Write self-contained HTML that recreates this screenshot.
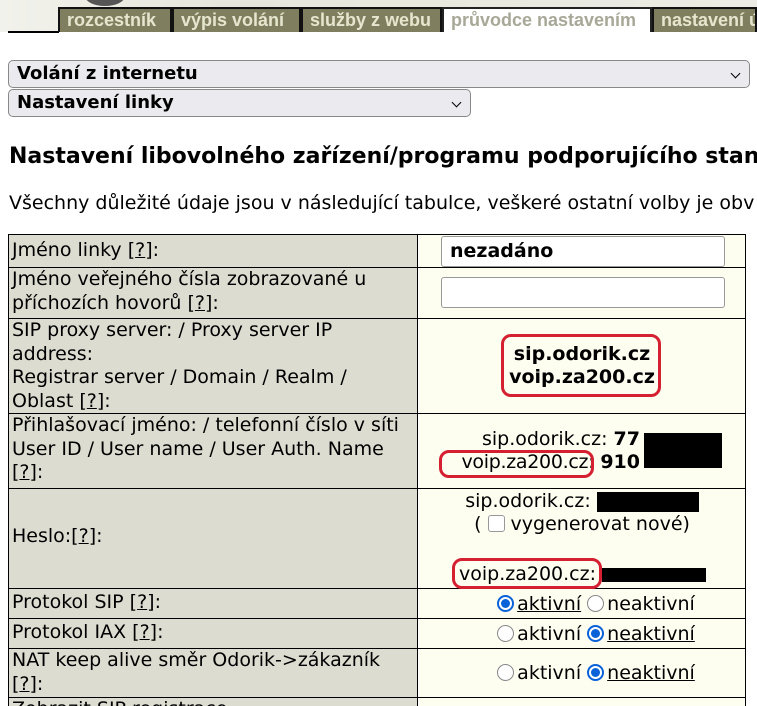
<!DOCTYPE html>
<html style="overflow:hidden"><head><meta charset="utf-8"><style>
*{box-sizing:border-box}
body{margin:0;width:757px;height:706px;overflow:hidden;background:#fff;font-family:"DejaVu Sans","Liberation Sans",sans-serif;font-size:19px;color:#000;position:relative}
#w{position:absolute;left:0;top:0;width:757px;height:706px;overflow:hidden}
.hdr{position:absolute;left:0;top:0;width:757px;height:32px;background:linear-gradient(90deg,#f2f2ec,#e6e6dc 30%,#ecece4)}
.blob{position:absolute;left:85px;top:-14px;width:40px;height:20px;border-radius:50%;background:#555}
.tab{position:absolute;top:7px;height:25px;background:#7f7f5f;border:2px solid #111;border-bottom:none;color:#e6e6cf;font-family:"Liberation Sans",sans-serif;font-size:18px;font-weight:bold;line-height:22px;padding-left:7px;white-space:nowrap;overflow:hidden}
.tab.on{background:#fff;color:#a8a898;border-color:#222}
.sel{position:absolute;left:8px;height:28px;border:1px solid #888;border-radius:5px;background:#ebebef;font-weight:bold;font-size:18px;line-height:26px;padding-left:8px}
.sel:after{content:"";position:absolute;right:10px;top:9px;width:6px;height:6px;border-right:1.5px solid #000;border-bottom:1.5px solid #000;transform:rotate(45deg)}
h2{position:absolute;left:9px;top:144px;margin:0;font-size:22px;white-space:nowrap}
p{position:absolute;left:9px;top:192px;margin:0;white-space:nowrap}
.row{position:absolute;left:8px;width:738px;border:1px solid #000;border-top:none}
.l{position:absolute;left:0;top:0;bottom:0;width:409px;background:#dcdcd0;border-right:1px solid #000;padding:0 3px;line-height:23.5px;white-space:nowrap}
.r{position:absolute;left:410px;top:0;bottom:0;right:0;background:#fdfdf0;text-align:center;line-height:23px;white-space:nowrap}
u{text-decoration:underline}
.inp{position:absolute;left:22px;width:284px;height:31px;border:1px solid #999;border-radius:3px;background:#fff;text-align:left;padding-left:8px;font-weight:bold;line-height:29px}
.red{position:absolute;border:3px solid #d42030;border-radius:10px}
.blk{display:inline-block;background:#000;vertical-align:middle}
.rad{display:inline-block;width:17px;height:17px;border-radius:50%;border:1px solid #888;background:#fff;vertical-align:-2px;margin-right:3px;position:relative}
.rad.on{border:2px solid #0a62d8}
.rad.on:after{content:"";position:absolute;left:2px;top:2px;width:9px;height:9px;border-radius:50%;background:#0a62d8}
</style></head><body><div id="w">
<div class="hdr"><div class="blob"></div></div>
<div style="position:absolute;left:8px;top:31px;width:51px;height:2px;background:#000"></div>
<div class="tab" style="left:58px;width:114px">rozcestník</div>
<div class="tab" style="left:172px;width:129px">výpis volání</div>
<div class="tab" style="left:301px;width:141px">služby z webu</div>
<div class="tab on" style="left:442px;width:210px">průvodce nastavením</div>
<div class="tab" style="left:652px;width:105px">nastavení ú</div>

<div class="sel" style="top:60px;width:742px">Volání z internetu</div>
<div class="sel" style="top:89px;width:463px">Nastavení linky</div>

<h2>Nastavení libovolného zařízení/programu podporujícího standard SIP</h2>
<p>Všechny důležité údaje jsou v následující tabulce, veškeré ostatní volby je obv</p>

<div style="position:absolute;left:8px;top:234px;width:738px;height:1px;background:#000"></div>
<div class="row" style="top:235px;height:33px"><div class="l" style="padding-top:4px">Jméno linky [<u>?</u>]:</div><div class="r"><div class="inp" style="top:1px">nezadáno</div></div></div>
<div class="row" style="top:268px;height:51px"><div class="l">Jméno veřejného čísla zobrazované u<br>příchozích hovorů [<u>?</u>]:</div><div class="r"><div class="inp" style="top:9px"></div></div></div>
<div class="row" style="top:319px;height:95px"><div class="l">SIP proxy server: / Proxy server IP<br>address:<br>Registrar server / Domain / Realm /<br>Oblast [<u>?</u>]:</div><div class="r" style="font-weight:bold;font-size:19px"><div style="position:absolute;left:0;right:0;top:24px">sip.odorik.cz<br>voip.za200.cz</div><div class="red" style="left:82px;top:15px;width:160px;height:63px"></div></div></div>
<div class="row" style="top:414px;height:75px"><div class="l">Přihlašovací jméno: / telefonní číslo v síti<br>User ID / User name / User Auth. Name<br>[<u>?</u>]:</div><div class="r"><div style="position:absolute;left:0px;top:14px;text-align:right;width:221px">sip.odorik.cz: <b>77</b><br><span style="letter-spacing:-0.3px">voip.za200.cz:</span>&nbsp;<b>910</b></div><div class="blk" style="position:absolute;left:225px;top:19px;width:78px;height:35px"></div><div class="red" style="left:20px;top:36px;width:155px;height:28px"></div></div></div>
<div class="row" style="top:489px;height:100px"><div class="l" style="padding-top:36px">Heslo:[<u>?</u>]:</div><div class="r"><div style="position:absolute;left:0;right:0;top:1px">sip.odorik.cz: <span class="blk" style="width:102px;height:20px"></span><br>( <span style="display:inline-block;width:17px;height:17px;border:1px solid #999;border-radius:3px;background:#fff;vertical-align:-2px"></span> vygenerovat nové)</div><div style="position:absolute;left:40px;top:74px">voip.za200.cz: <span class="blk" style="width:104px;height:14px"></span></div><div class="red" style="left:33px;top:69px;width:150px;height:31px"></div></div></div>
<div class="row" style="top:589px;height:30px"><div class="l" style="padding-top:2px">Protokol SIP [<u>?</u>]:</div><div class="r" style="padding-top:4px;padding-left:28px"><span class="rad on"></span><u>aktivní</u> <span class="rad"></span>neaktivní</div></div>
<div class="row" style="top:619px;height:30px"><div class="l" style="padding-top:2px">Protokol IAX [<u>?</u>]:</div><div class="r" style="padding-top:4px;padding-left:28px"><span class="rad"></span>aktivní <span class="rad on"></span><u>neaktivní</u></div></div>
<div class="row" style="top:649px;height:49px"><div class="l">NAT keep alive směr Odorik-&gt;zákazník<br>[<u>?</u>]:</div><div class="r" style="padding-top:13px;padding-left:28px"><span class="rad"></span>aktivní <span class="rad on"></span><u>neaktivní</u></div></div>
<div class="row" style="top:698px;height:30px"><div class="l">Zobrazit SIP registrace</div><div class="r"></div></div>
</div></body></html>
